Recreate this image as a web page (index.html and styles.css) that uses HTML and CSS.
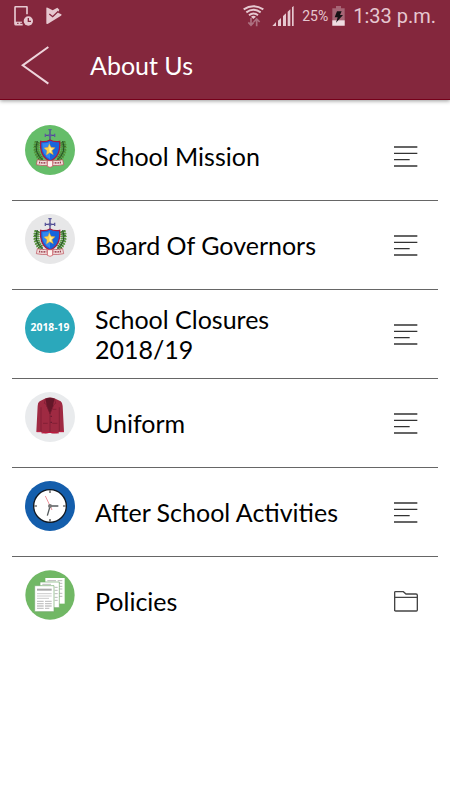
FILE: index.html
```html
<!DOCTYPE html>
<html lang="en">
<head>
<meta charset="utf-8">
<meta name="viewport" content="width=device-width, initial-scale=1">
<title>About Us</title>
<link rel="stylesheet" href="styles.css">
</head>
<body>
<svg class="defs" aria-hidden="true">
  <defs>
    <g id="crest">
      <g fill="none" stroke="#2f6b2c" stroke-width="14" stroke-dasharray="5 2">
        <path d="M67 80Q57 110 80 134"/><path d="M143 80Q153 110 130 134"/>
      </g>
      <g fill="none" stroke="#5c9a3c" stroke-width="19" stroke-dasharray="3 4">
        <path d="M67 82Q58 110 78 132"/><path d="M143 82Q152 110 132 132"/>
      </g>
      <g fill="none" stroke="#234f25" stroke-width="3">
        <path d="M67 78Q54 112 86 138"/><path d="M143 78Q156 112 124 138"/>
      </g>
      <path d="M105 44V78M91 61H119" stroke="#4d4a91" stroke-width="4"/>
      <path d="M100 44h10M91 56v10M119 56v10" stroke="#5e5b9d" stroke-width="4"/>
      <circle cx="105" cy="61" r="5" fill="#5e5b9d"/>
      <path d="M77 79Q92 82 105 75Q118 82 134 79Q138 125 105 138Q73 125 77 79Z" fill="#1765dc" stroke="#a61c42" stroke-width="4"/>
      <path d="M82 84Q94 86 105 80V132Q80 121 82 84Z" fill="#3388ef"/>
      <path d="M103 86l5 11 12 1-9 9 4 12-11-6-10 7 2-13-9-8 12-2Z" fill="#ffd34c" stroke="#f5a52a" stroke-width="1"/>
      <path d="M104 91l3 9 7 1-6 6 1 7-6-4Z" fill="#fff3a1"/>
      <path d="M67 134q15 4 29 2l3 15q-17 2-35-2l3-15ZM143 134q-15 4-29 2l-3 15q17 2 35-2l-3-15Z" fill="#f2dddc" stroke="#b84650" stroke-width="2"/>
      <path d="M97 137h16v17q-8 6-16 0Z" fill="#fff4ef" stroke="#c34250" stroke-width="2"/>
      <path d="M72 142q12 3 22 1M138 142q-12 3-22 1" fill="none" stroke="#9c3c4b" stroke-width="5" stroke-dasharray="3 2"/>
    </g>
    <g id="lines" fill="none" stroke="#333" stroke-width="4">
      <path d="M0 3H70M0 22H70M0 41H47M0 60H70"/>
    </g>
  </defs>
</svg>

<header class="header">
  <div class="status">
    <div class="status-group status-left">
      <svg class="ic-phone" viewBox="0 0 60 60" aria-hidden="true">
        <path d="M39 25V3Q39 2 36 2H6Q3 2 3 5V53Q3 56 6 56H26" fill="none" stroke="#e6c8d0" stroke-width="5"/>
        <path d="M3 47H24V57H3Z" fill="#e6c8d0"/><path d="M9 52h5M19 52h5" stroke="#84273d" stroke-width="3"/>
        <circle cx="43" cy="45" r="14" fill="#e6c8d0"/>
        <path d="M43 36V46H51" fill="none" stroke="#84273d" stroke-width="4"/>
      </svg>
      <svg class="ic-check" viewBox="0 0 48 54" aria-hidden="true">
        <path d="M1 3Q1 0 5 2L20 10 34 2 40 8 36 17 46 22Q48 24 45 26L6 50Q1 52 1 49Z" fill="#e6c8d0"/>
        <path d="M10 21L20 29 37 13" fill="none" stroke="#84273d" stroke-width="4"/>
      </svg>
    </div>
    <div class="status-group status-right">
      <svg class="ic-wifi" viewBox="0 0 63 66" aria-hidden="true">
        <g fill="none" stroke="#e6c8d0" stroke-width="6"><path d="M2 13Q31-6 61 13"/><path d="M10 22Q31 7 53 22"/><path d="M18 31Q31 20 45 31"/></g>
        <path d="M24 35Q31 30 39 35L31 42Z" fill="#e6c8d0"/>
        <path d="M24 39V60M16 52l8 9 8-9M41 64V43M32 51l9-9 9 9" fill="none" stroke="#ad7080" stroke-width="5"/>
      </svg>
      <svg class="ic-signal" viewBox="0 0 66 60" aria-hidden="true">
        <path d="M1 60L12 48V60ZM18 44L27 36V60H18ZM33 30L42 22V60H33ZM47 17L55 10V60H47ZM60 4L65 0V60H60Z" fill="#e6c8d0"/>
      </svg>
      <span class="percent">25%</span>
      <svg class="ic-battery" viewBox="0 0 39 60" aria-hidden="true">
        <path d="M12 0H27V7H38V59H1V7H12Z" fill="#a66676"/><path d="M1 43H38V59H1Z" fill="#f0dde2"/>
        <path d="M15 16H29L24 27H33L12 50 17 34H8Z" fill="#151214"/>
      </svg>
      <time class="clock">1:33 p.m.</time>
    </div>
  </div>
  <div class="bar">
    <button class="back" type="button" aria-label="Back">
      <svg viewBox="0 0 84 117" aria-hidden="true"><path d="M82 3L5 58 82 113" fill="none" stroke="#eed5dc" stroke-width="6"/></svg>
    </button>
    <h1 class="title">About Us</h1>
  </div>
</header>

<main>
  <ul class="menu">
    <li class="row"><a class="link" href="#mission">
      <svg class="badge" viewBox="30 30 150 150" aria-hidden="true"><circle cx="105" cy="105" r="75" fill="#65bd69"/><use href="#crest"/></svg>
      <span class="label">School Mission</span>
      <svg class="kind" viewBox="0 0 72 63" aria-hidden="true"><use href="#lines"/></svg>
    </a></li>
    <li class="row"><a class="link" href="#governors">
      <svg class="badge" viewBox="30 30 150 150" aria-hidden="true"><circle cx="105" cy="105" r="75" fill="#e7e7e8"/><use href="#crest"/></svg>
      <span class="label">Board Of Governors</span>
      <svg class="kind" viewBox="0 0 72 63" aria-hidden="true"><use href="#lines"/></svg>
    </a></li>
    <li class="row"><a class="link" href="#closures">
      <svg class="badge" viewBox="30 30 150 150" aria-hidden="true"><circle cx="105" cy="105" r="75" fill="#2ba8bb"/><text class="badge-text" x="105" y="115" text-anchor="middle">2018-19</text></svg>
      <span class="label">School Closures 2018/19</span>
      <svg class="kind" viewBox="0 0 72 63" aria-hidden="true"><use href="#lines"/></svg>
    </a></li>
    <li class="row"><a class="link" href="#uniform">
      <svg class="badge" viewBox="30 30 150 150" aria-hidden="true"><circle cx="105" cy="105" r="75" fill="#e9ebed"/>
        <path d="M92 49Q105 44 118 49L137 58Q142 61 143 72L147 149H134L133 151Q118 158 105 152Q91 157 77 151V149H64L68 72Q68 61 74 58Z" fill="#9f2a42"/>
        <path d="M92 50Q105 45 118 50L114 73 105 96 95 73Z" fill="#641729"/>
        <path d="M92 50L88 64 94 67 105 96 117 67 122 64 118 50M105 94V152M78 76V149M133 76V149M84 124H98M112 124H127M113 82H124" fill="none" stroke="#761a30" stroke-width="2"/>
        <path d="M65 149H77M134 149H147M80 153Q105 149 131 153" fill="none" stroke="#c1183f" stroke-width="3"/>
        <path d="M107 103h3M107 121h3" stroke="#54152b" stroke-width="4"/>
      </svg>
      <span class="label">Uniform</span>
      <svg class="kind" viewBox="0 0 72 63" aria-hidden="true"><use href="#lines"/></svg>
    </a></li>
    <li class="row"><a class="link" href="#activities">
      <svg class="badge" viewBox="30 30 150 150" aria-hidden="true"><circle cx="105" cy="105" r="75" fill="#145eac"/>
        <circle cx="105" cy="105" r="49" fill="#fff" stroke="#111820" stroke-width="4"/>
        <path d="M105 57v9M105 144v9M57 105h9M144 105h9" stroke="#777" stroke-width="5"/>
        <path d="M105 105H130M106 103L97 134" stroke="#555b5d" stroke-width="4"/>
        <path d="M91 75L111 117" stroke="#ef929b" stroke-width="3"/>
        <circle cx="105" cy="105" r="6" fill="#777"/>
      </svg>
      <span class="label">After School Activities</span>
      <svg class="kind" viewBox="0 0 72 63" aria-hidden="true"><use href="#lines"/></svg>
    </a></li>
    <li class="row"><a class="link" href="#policies">
      <svg class="badge" viewBox="30 27 150 150" aria-hidden="true"><circle cx="105" cy="102" r="74" fill="#71b865"/>
        <path d="M91 51H149V128H91Z" fill="#fff"/><path d="M97 59H123M128 59H142M128 67H142M128 76H142M128 84H142M128 97H142M128 106H142" stroke="#bbb" stroke-width="3"/>
        <path d="M75 63H133V140H75Z" fill="#fff" stroke="#72a96c" stroke-width="2"/><path d="M82 70H108M119 79H128M119 88H128M119 98H128M119 109H128M119 118H128" stroke="#bbb" stroke-width="3"/>
        <path d="M59 74H117V152H59Z" fill="#fff" stroke="#72a96c" stroke-width="2"/>
        <path d="M66 86H110" stroke="#aaa" stroke-width="6"/><path d="M66 98H110M66 105H110M66 112H102" stroke="#ccc" stroke-width="3"/>
        <path d="M66 121H86M66 128H86M66 135H86M66 142H86M90 121H110M90 128H110M90 135H110M90 142H103" stroke="#c5c5c5" stroke-width="4"/>
      </svg>
      <span class="label">Policies</span>
      <svg class="kind" viewBox="0 0 72 63" aria-hidden="true"><path d="M2 60V4Q2 2 5 2H28L36 9H66Q70 9 70 13V57Q70 60 67 60H5Q2 60 2 57M2 19H70" fill="none" stroke="#444" stroke-width="4"/></svg>
    </a></li>
  </ul>
</main>
</body>
</html>
```
FILE: styles.css
```css
* { box-sizing: border-box; }

body {
  margin: 0;
  background: #fff;
  color: #000;
  font-family: Lato, sans-serif;
}

svg { display: block; flex: none; }

.defs { width: 0; height: 0; position: absolute; }

.header {
  height: 100px;
  background: #84273d;
  border-bottom: 1px solid #75001a;
  box-shadow: 0 1px 4px rgba(0, 0, 0, 0.4);
  color: #fff;
}

.status {
  display: flex;
  justify-content: space-between;
  height: 31px;
  padding: 0 14px;
  color: #e6c8d0;
  font-family: Roboto, sans-serif;
}

.status-group { display: flex; align-items: center; }
.status-left { gap: 12px; }
.status-right { gap: 8px; }

.ic-phone { width: 20px; height: 20px; }
.ic-check { width: 16px; height: 18px; }
.ic-wifi { width: 21px; height: 22px; }
.ic-signal { width: 22px; height: 20px; }
.ic-battery { width: 13px; height: 20px; }

.percent { margin-right: -4px; font-size: 14px; }
.clock { font-size: 20px; }

.bar {
  display: flex;
  align-items: center;
  height: 68px;
  padding: 0 21px;
}

.back {
  width: 69px;
  padding: 0;
  border: 0;
  background: none;
  cursor: pointer;
}

.back svg { width: 28px; height: 39px; }

.title {
  margin: 0;
  font-size: 25px;
  font-weight: 400;
  line-height: 30px;
}

.menu {
  margin: 0;
  padding: 12px 12px 0;
  list-style: none;
}

.row { border-bottom: 1px solid #666; }
.row:last-child { border-bottom: 0; }

.link {
  display: flex;
  align-items: center;
  min-height: 88px;
  padding: 0 20px 0 13px;
  color: inherit;
  text-decoration: none;
}

.badge {
  width: 50px;
  height: 50px;
  margin-bottom: 12px;
}

.badge-text {
  fill: #fff;
  font-family: "Open Sans", sans-serif;
  font-size: 31px;
  font-weight: 700;
}

.label {
  flex: 1;
  margin: 0 48px 0 20px;
  font-size: 25px;
  line-height: 30px;
}

.kind { width: 24px; height: 21px; }
```
